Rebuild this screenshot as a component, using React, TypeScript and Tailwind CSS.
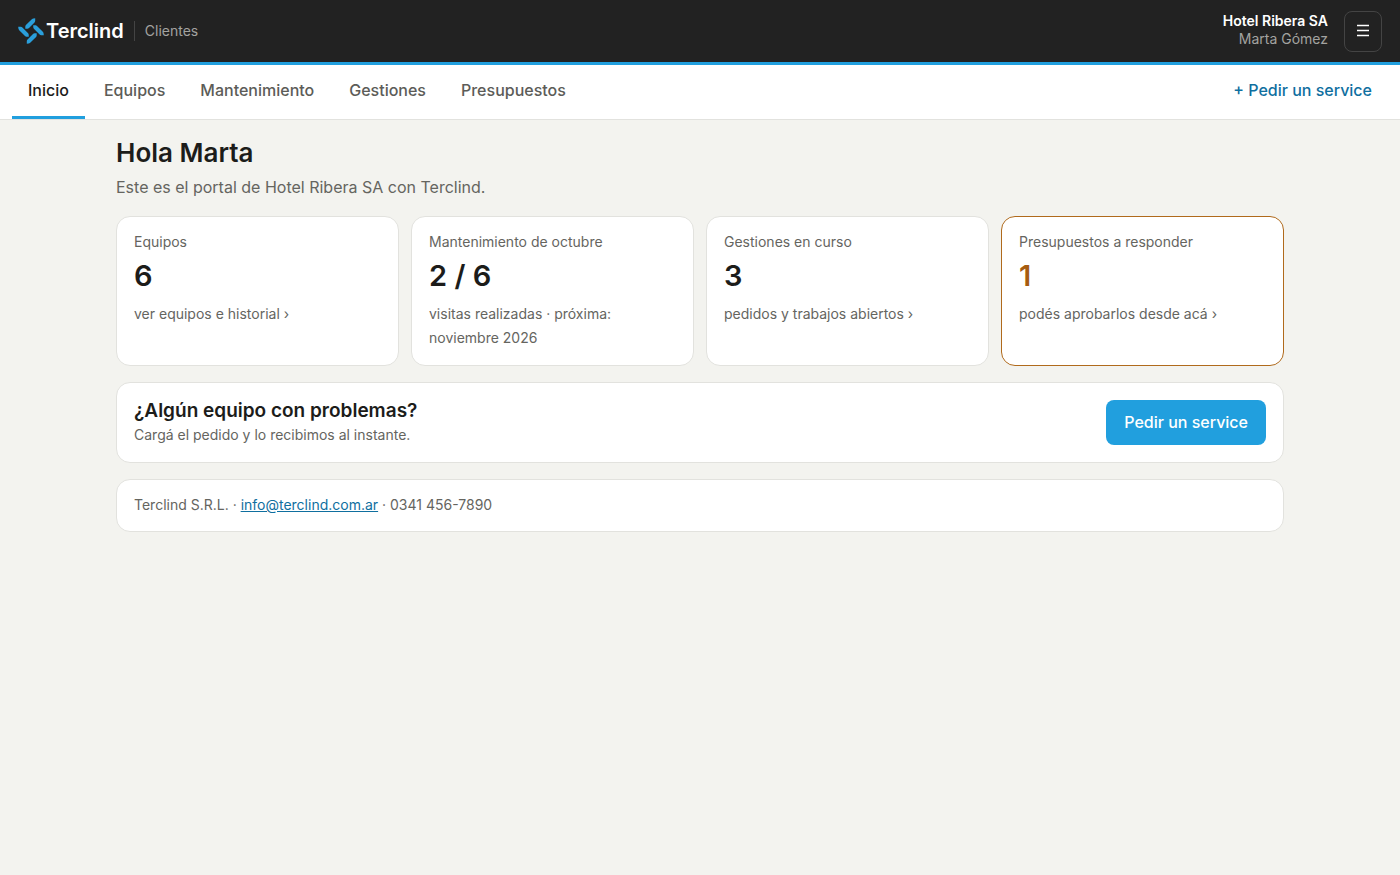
import React from 'react'

const NAV_ITEMS = ['Inicio', 'Equipos', 'Mantenimiento', 'Gestiones', 'Presupuestos']

const STATS = [
  { label: 'Equipos', value: '6', detail: 'ver equipos e historial ›' },
  { label: 'Mantenimiento de octubre', value: '2 / 6', detail: 'visitas realizadas · próxima: noviembre 2026' },
  { label: 'Gestiones en curso', value: '3', detail: 'pedidos y trabajos abiertos ›' },
  { label: 'Presupuestos a responder', value: '1', detail: 'podés aprobarlos desde acá ›', alert: true },
]

const BLADE = 'M-5.7 -2.2 L-5.7 -4.6 Q-5.7 -5.4 -5.1 -6 L0.8 -11.8 Q1.5 -12.5 2.4 -12.6 L4.2 -12.8 L4.2 -10.2 Q4.2 -9.3 3.5 -8.6 L-2 -3.1 Q-2.7 -2.4 -3.6 -2.3 Z'

const LogoMark: React.FC = () => (
  <svg viewBox="-13 -13 26 26" className="h-[26px] w-[26px]" fill="#2a9fdb" aria-hidden="true">
    {[0, 90, 180, 270].map((angle) => (
      <path key={angle} d={BLADE} transform={`rotate(${angle})`} />
    ))}
  </svg>
)

const Header: React.FC = () => (
  <header className="flex h-[65px] items-center justify-between border-b-3 border-[#219fde] bg-[#222222] px-[18px]">
    <div className="flex items-center">
      <a href="#inicio" className="flex items-center gap-[2px]">
        <LogoMark />
        <span className="text-xl leading-6 font-semibold text-white">Terclind</span>
      </a>
      <span className="ml-[10px] border-l border-[#444444] pl-[10px] text-sm leading-5 text-[#a3a3a0]">Clientes</span>
    </div>
    <div className="flex items-center gap-4">
      <div className="pb-[2px] text-right text-sm leading-[18px]">
        <div className="font-semibold text-white">Hotel Ribera SA</div>
        <div className="text-[#a3a3a0]">Marta Gómez</div>
      </div>
      <button
        aria-label="Menú"
        className="flex h-[41px] w-[38px] items-center justify-center rounded-lg border border-[#444444] text-white"
      >
        <svg viewBox="0 0 14 14" className="h-[14px] w-[14px]" stroke="currentColor" strokeWidth="1.3" aria-hidden="true">
          <path d="M1 1.5h12M1 6.5h12M1 11.5h12" />
        </svg>
      </button>
    </div>
  </header>
)

const Nav: React.FC = () => (
  <nav className="flex items-stretch justify-between border-b border-[#e2e2de] bg-white px-3 text-base leading-6 font-medium">
    <div className="flex gap-[3px]">
      {NAV_ITEMS.map((item, i) => (
        <a
          key={item}
          href={`#${item.toLowerCase()}`}
          className={`border-b-3 px-4 pt-[13px] pb-[14px] ${
            i === 0 ? 'border-[#219fde] text-[#1c1c1a]' : 'border-transparent text-[#5c5c58]'
          }`}
        >
          {item}
        </a>
      ))}
    </div>
    <a href="#pedir" className="px-4 pt-[13px] text-[#0f6f9f]">
      + Pedir un service
    </a>
  </nav>
)

const App: React.FC = () => (
  <div className="min-h-screen bg-[#f3f3ef] font-['Inter',sans-serif] text-[#1c1c1a]">
    <Header />
    <Nav />
    <main className="mx-auto max-w-[1200px] px-4 pt-[17px]">
      <h1 className="text-[26px] leading-8 font-semibold">Hola Marta</h1>
      <p className="mt-1 text-base leading-7 text-[#65655f]">Este es el portal de Hotel Ribera SA con Terclind.</p>

      <div className="mt-[15px] grid grid-cols-4 gap-3">
        {STATS.map(({ label, value, detail, alert }) => (
          <a
            key={label}
            href="#detalle"
            className={`rounded-[14px] border bg-white px-[17px] pt-[13px] pb-[15px] text-sm leading-6 text-[#65655f] ${
              alert ? 'border-[#b06a1c]' : 'border-[#e2e2de]'
            }`}
          >
            <div>{label}</div>
            <div className={`mt-1 mb-2 text-[29px] leading-9 font-semibold ${alert ? 'text-[#a65c10]' : 'text-[#1c1c1a]'}`}>
              {value}
            </div>
            <div>{detail}</div>
          </a>
        ))}
      </div>

      <section className="mt-4 flex items-center justify-between rounded-[14px] border border-[#e2e2de] bg-white px-[17px] py-[15px]">
        <div>
          <h2 className="text-[19px] leading-[25px] font-semibold">¿Algún equipo con problemas?</h2>
          <p className="text-sm leading-6 text-[#65655f]">Cargá el pedido y lo recibimos al instante.</p>
        </div>
        <button className="rounded-lg bg-[#219fde] px-[18px] py-[10px] text-base leading-[25px] font-medium text-white">
          Pedir un service
        </button>
      </section>

      <footer className="mt-4 rounded-[14px] border border-[#e2e2de] bg-white px-[17px] pt-[13px] pb-[14px] text-sm leading-6 text-[#65655f]">
        Terclind S.R.L. ·{' '}
        <a href="mailto:info@terclind.com.ar" className="text-[#0f6f9f] underline">
          info@terclind.com.ar
        </a>{' '}
        · 0341 456-7890
      </footer>
    </main>
  </div>
)

export default App
